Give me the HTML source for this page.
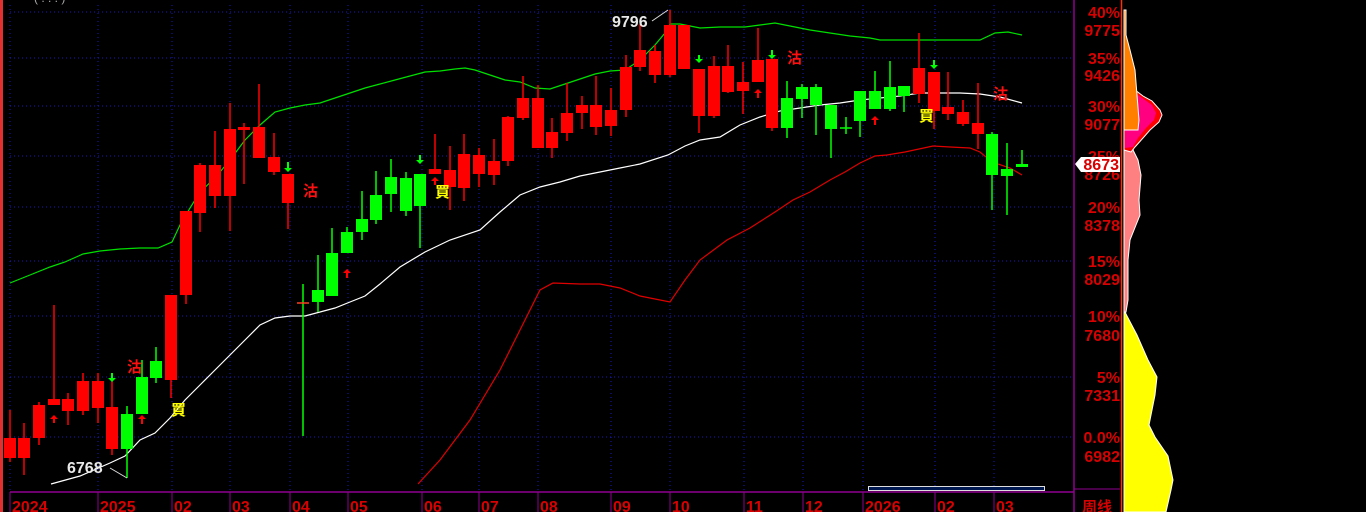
<!DOCTYPE html>
<html><head><meta charset="utf-8"><style>
html,body{margin:0;padding:0;background:#000;width:1366px;height:512px;overflow:hidden}
svg{display:block}
.ax{font-family:"Liberation Sans","Noto Sans CJK SC",sans-serif;font-weight:bold;font-size:16px;fill:#d80000}
.ch{font-family:"Liberation Sans","Noto Sans CJK TC",sans-serif;font-weight:bold;font-size:15px}
</style></head><body>
<svg width="1366" height="512" viewBox="0 0 1366 512" xmlns="http://www.w3.org/2000/svg">
<rect width="1366" height="512" fill="#000"/>
<rect x="0" y="0" width="3" height="512" fill="#e03030"/>
<!-- grid -->
<g stroke="#1a1ac0" stroke-width="1" stroke-dasharray="1 3">
<path d="M10 12H1074M10 58H1074M10 106H1074M10 156H1074M10 207H1074M10 261H1074M10 316H1074M10 377H1074M10 437H1074"/>
<path d="M10 5V492M98 5V492M172 5V492M230 5V492M290 5V492M348 5V492M422 5V492M479 5V492M538 5V492M611 5V492M670 5V492M744 5V492M803 5V492M863 5V492M935 5V492M994 5V492"/>
</g>
<!-- bands -->
<polyline fill="none" stroke="#00e000" stroke-width="1.2" points="10,283 30,275 50,267 65,262 83,254 100,251 120,249 140,248 158,248 172,242 180,225 190,208 200,192 215,178 230,160 245,140 260,125 275,112 290,108 305,105 320,103 335,98 350,93 365,88 380,84 395,80 410,76 425,72 440,71 455,69 465,68 475,70 490,75 505,80 520,82 535,88 550,89 565,84 580,79 595,74 610,71 625,70 640,60 655,45 665,33 670,24 680,24 700,28 720,27 745,27 760,25 775,23 790,26 810,30 830,33 850,36 870,38 880,40 900,40 940,40 980,40 995,33 1008,32 1022,35"/>
<polyline fill="none" stroke="#ffffff" stroke-width="1.2" points="51,484 80,476 110,463 125,456 140,440 155,433 170,418 185,400 200,385 215,370 230,355 245,340 260,325 275,318 290,316 305,316 320,312 335,308 350,302 365,296 380,284 400,267 425,252 450,240 480,230 500,212 520,195 540,187 560,182 580,176 600,172 620,168 640,164 668,155 685,146 700,140 720,137 740,125 760,117 780,111 800,108 820,105 840,103 860,100 880,98 900,96 920,93 960,93 980,94 1000,97 1022,103"/>
<polyline fill="none" stroke="#e00000" stroke-width="1.2" points="418,484 440,460 470,420 500,370 520,330 540,290 553,283 580,284 600,284 620,288 640,296 655,299 670,302 685,280 700,260 727,240 750,228 775,212 793,200 810,192 830,180 845,172 860,163 875,156 887,155 905,152 933,146 950,147 970,148 980,152 992,162 1010,168 1022,175"/>
<!-- red candles -->
<path stroke="#ff0000" stroke-width="1.5" fill="none" d="M10 410V462M24 423V475M39 402V445M54 305V405M68 393V425M83 373V415M98 373V423M112 380V455M171 295V398M186 211V304M200 163V232M215 131V208M230 103V231M244 123V184M259 84V158M274 133V175M288 174V229M435 134V174M450 146V210M464 134V201M479 148V187M494 139V185M508 116V166M523 76V120M538 85V148M552 118V158M567 83V141M582 96V129M596 76V135M611 88V136M626 55V117M640 24V71M655 45V83M670 10V77M699 69V133M714 56V118M728 45V93M743 62V114M758 28V82M772 59V131M919 33V103M934 72V129M948 72V120M963 100V126M978 83V149"/>
<path fill="#ff0000" d="M4 438h12V458h-12zM18 438h12V458h-12zM33 405h12V438h-12zM48 399h12V405h-12zM62 399h12V411h-12zM77 381h12V411h-12zM92 381h12V408h-12zM106 407h12V449h-12zM165 295h12V380h-12zM180 211h12V295h-12zM194 165h12V213h-12zM209 165h12V196h-12zM224 129h12V196h-12zM238 127h12V130h-12zM253 127h12V158h-12zM268 157h12V172h-12zM282 174h12V203h-12zM429 169h12V174h-12zM444 170h12V187h-12zM458 154h12V188h-12zM473 155h12V174h-12zM488 161h12V175h-12zM502 117h12V161h-12zM517 98h12V118h-12zM532 98h12V148h-12zM546 132h12V148h-12zM561 113h12V133h-12zM576 105h12V113h-12zM590 105h12V127h-12zM605 110h12V126h-12zM620 67h12V110h-12zM634 50h12V67h-12zM649 51h12V75h-12zM664 25h12V75h-12zM678 25h12V69h-12zM693 69h12V116h-12zM708 66h12V116h-12zM722 66h12V92h-12zM737 82h12V91h-12zM752 60h12V82h-12zM766 59h12V128h-12zM913 68h12V94h-12zM928 72h12V111h-12zM942 107h12V114h-12zM957 112h12V124h-12zM972 123h12V134h-12z"/>
<!-- green candles -->
<path stroke="#00ff00" stroke-width="1.5" fill="none" d="M127 406V478M142 360V414M156 347V383M303 284V436M318 255V312M332 228V296M347 227V253M362 191V240M376 171V224M391 159V212M406 172V216M420 174V248M787 81V138M802 84V118M816 84V135M831 105V158M846 117V134M860 91V137M875 71V109M890 61V111M904 86V112M992 132V210M1007 143V215M1022 150V164M840 128H852"/>
<path fill="#00ff00" d="M121 414h12V449h-12zM136 377h12V414h-12zM150 361h12V378h-12zM312 290h12V302h-12zM326 253h12V296h-12zM341 232h12V253h-12zM356 219h12V232h-12zM370 195h12V220h-12zM385 177h12V194h-12zM400 178h12V211h-12zM414 174h12V206h-12zM781 98h12V128h-12zM796 87h12V99h-12zM810 87h12V105h-12zM825 105h12V129h-12zM854 91h12V121h-12zM869 91h12V109h-12zM884 87h12V109h-12zM898 86h12V96h-12zM986 134h12V175h-12zM1001 169h12V176h-12zM1016 164h12V167h-12z"/>
<path stroke="#ff4020" stroke-width="1.5" d="M297 303H309"/>
<!-- arrows -->
<g fill="#00ff00">
<path d="M111 373h2v5h3l-4 4l-4-4h3z"/><path d="M287 162h2v6h3l-4 4l-4-4h3z"/><path d="M419 155h2v5h3l-4 4l-4-4h3z"/><path d="M698 55h2v4h3l-4 4l-4-4h3z"/><path d="M771 50h2v5h3l-4 4l-4-4h3z"/><path d="M933 60h2v5h3l-4 4l-4-4h3z"/>
</g>
<g fill="#ff0000">
<path d="M53 423h2v-4h3l-4-4l-4 4h3z"/><path d="M141 424h2v-5h3l-4-4l-4 4h3z"/><path d="M346 278h2v-5h3l-4-4l-4 4h3z"/><path d="M434 185h2v-4h3l-4-4l-4 4h3z"/><path d="M757 98h2v-5h3l-4-4l-4 4h3z"/><path d="M874 125h2v-5h3l-4-4l-4 4h3z"/>
</g>
<g class="ch" fill="#ff1010">
<text x="127" y="372">沽</text><text x="303" y="196">沽</text><text x="787" y="63">沽</text><text x="993" y="99">沽</text>
</g>
<g class="ch" fill="#ffff00">
<text x="171" y="415">買</text><text x="435" y="197">買</text><text x="919" y="121">買</text>
</g>
<!-- hi/lo labels -->
<text x="612" y="27" font-family="Liberation Sans,sans-serif" font-weight="bold" font-size="16" fill="#e8e8e8">9796</text>
<path d="M652 21L668 10" stroke="#ddd" stroke-width="1"/>
<text x="67" y="473" font-family="Liberation Sans,sans-serif" font-weight="bold" font-size="16" fill="#e8e8e8">6768</text>
<path d="M110 468L127 478" stroke="#ddd" stroke-width="1"/>
<text x="34" y="2" font-family="Liberation Sans,sans-serif" font-size="12" fill="#aaa">( . . . )</text>
<!-- bottom axis -->
<path d="M10 492H1074" stroke="#900090" stroke-width="1.5"/>
<path stroke="#900090" stroke-width="1" d="M10 492V512M98 492V512M172 492V512M230 492V512M290 492V512M348 492V512M422 492V512M479 492V512M538 492V512M611 492V512M670 492V512M744 492V512M803 492V512M863 492V512M935 492V512M994 492V512"/>
<g class="ax" font-size="15">
<text x="12" y="512">2024</text><text x="100" y="512">2025</text><text x="174" y="512">02</text><text x="232" y="512">03</text><text x="292" y="512">04</text><text x="350" y="512">05</text><text x="424" y="512">06</text><text x="481" y="512">07</text><text x="540" y="512">08</text><text x="613" y="512">09</text><text x="672" y="512">10</text><text x="746" y="512">11</text><text x="805" y="512">12</text><text x="865" y="512">2026</text><text x="937" y="512">02</text><text x="996" y="512">03</text>
</g>
<rect x="868.5" y="486.5" width="176" height="4" fill="#001850" stroke="#ddd" stroke-width="1"/>
<!-- right axis -->
<path d="M1074 0V512" stroke="#900090" stroke-width="1.5"/>
<path d="M1074 489H1120" stroke="#900090" stroke-width="1"/>
<path d="M1121.5 0V512" stroke="#ff3000" stroke-width="1.5"/>
<g class="ax" text-anchor="end">
<text x="1120" y="18">40%</text><text x="1120" y="36">9775</text>
<text x="1120" y="64">35%</text><text x="1120" y="81">9426</text>
<text x="1120" y="112">30%</text><text x="1120" y="130">9077</text>
<text x="1120" y="162">25%</text><text x="1120" y="180">8726</text>
<text x="1120" y="213">20%</text><text x="1120" y="231">8378</text>
<text x="1120" y="267">15%</text><text x="1120" y="285">8029</text>
<text x="1120" y="322">10%</text><text x="1120" y="341">7680</text>
<text x="1120" y="383">5%</text><text x="1120" y="401">7331</text>
<text x="1120" y="443">0.0%</text><text x="1120" y="462">6982</text>
<text x="1112" y="512" font-size="15">周线</text>
</g>
<path d="M1075 164L1081 157H1120V172H1081Z" fill="#fff"/>
<text x="1119" y="170" text-anchor="end" class="ax" fill="#e00000">8673</text>
<!-- volume profile -->
<path fill="#ffff00" stroke="#fff" stroke-width="1" d="M1124 310L1127 316L1137 335L1148 360L1157 377L1155 395L1150 420L1149 425L1155 437L1168 456L1173 480L1171 490L1166 512H1124Z"/>
<path fill="#ffff00" d="M1124 223h3v20h-3z"/>
<path fill="#ff8080" stroke="#fff" stroke-width="1" d="M1124 86L1130 110L1137 140L1133 150L1138 160L1141 175L1139 200L1140 215L1136 225L1130 240L1128 260L1128 300L1126 312L1124 312Z"/>
<path fill="#ff0000" stroke="#fff" stroke-width="1" d="M1124 86L1135 90L1143 96L1152 101L1160 110L1162 115L1159 122L1150 130L1143 138L1135 147L1131 152L1124 150Z"/>
<path fill="#ff0080" d="M1125 88L1135 93L1145 100L1152 105L1156 113L1154 120L1146 128L1138 138L1133 147L1125 148Z"/>
<path fill="#ff8000" stroke="#fff" stroke-width="1" d="M1124 10L1126 10L1126 35L1130 50L1135 70L1137 95L1139 120L1138 130L1124 130Z"/>
</svg>
</body></html>
